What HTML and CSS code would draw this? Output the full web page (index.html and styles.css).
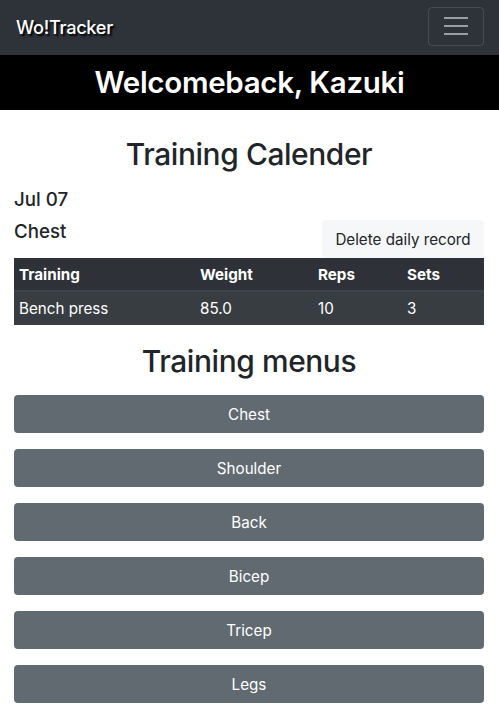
FILE: index.html
```html
<!DOCTYPE html>
<html lang="en">
<head>
<meta charset="utf-8">
<title>Wo!Tracker</title>
<link rel="stylesheet" href="styles.css">
</head>
<body>
<nav class="navbar">
  <a class="brand" href="#">Wo!Tracker</a>
  <button class="toggler" aria-label="menu">
    <span class="bar"></span><span class="bar"></span><span class="bar"></span>
  </button>
</nav>
<header class="welcome">Welcomeback, Kazuki</header>
<main class="container">
  <h2 class="title">Training Calender</h2>
  <div class="date">Jul 07</div>
  <div class="day-row">
    <div class="part">Chest</div>
    <button class="btn-light">Delete daily record</button>
  </div>
  <table class="records">
    <thead>
      <tr><th class="c1">Training</th><th class="c2">Weight</th><th class="c3">Reps</th><th class="c4">Sets</th></tr>
    </thead>
    <tbody>
      <tr><td>Bench press</td><td>85.0</td><td>10</td><td>3</td></tr>
    </tbody>
  </table>
  <h2 class="title menus-title">Training menus</h2>
  <div class="menus">
    <button class="btn-menu">Chest</button>
    <button class="btn-menu">Shoulder</button>
    <button class="btn-menu">Back</button>
    <button class="btn-menu">Bicep</button>
    <button class="btn-menu">Tricep</button>
    <button class="btn-menu">Legs</button>
  </div>
</main>
</body>
</html>
```
FILE: styles.css
```css
* { box-sizing: border-box; }
body {
  margin: 0;
  font-family: Inter, "Liberation Sans", sans-serif;
  color: #212529;
  background: #fff;
}
.navbar {
  height: 55px;
  background: #2e333a;
  display: flex;
  align-items: center;
  justify-content: space-between;
  padding: 0 15px 0 16px;
}
.brand {
  color: #fff;
  text-decoration: none;
  font-size: 18.2px;
  font-weight: 500;
  letter-spacing: -0.3px;
  text-shadow: 2px 2px 2px #000;
  margin-top: -2px;
}
.toggler {
  width: 56px;
  height: 39px;
  background: transparent;
  border: 1px solid rgba(255,255,255,0.12);
  border-radius: 4px;
  display: flex;
  flex-direction: column;
  align-items: center;
  justify-content: center;
  gap: 6px;
  padding: 0;
  margin-top: -3px;
}
.toggler .bar {
  display: block;
  width: 24px;
  height: 2px;
  background: #9a9da1;
}
.welcome {
  height: 55px;
  background: #000;
  color: #fff;
  text-align: center;
  font-size: 29.5px;
  font-weight: 600;
  line-height: 55px;
  letter-spacing: -0.3px;
}
.container {
  padding: 0 15px 0 14px;
}
.title {
  margin: 24px 0 0;
  font-size: 29.9px;
  font-weight: 500;
  line-height: 40px;
  text-align: center;
  letter-spacing: -0.4px;
}
.date {
  font-size: 18.7px;
  font-weight: 500;
  line-height: 28px;
  margin-top: 12px;
}
.day-row {
  display: flex;
  justify-content: space-between;
  align-items: flex-start;
}
.part {
  font-size: 18.7px;
  font-weight: 500;
  line-height: 28px;
  margin-top: 4px;
}
.btn-light {
  font-family: inherit;
  font-size: 15.2px;
  color: #212529;
  background: #f6f7f8;
  border: none;
  border-radius: 4px;
  height: 38px;
  width: 162px;
  padding: 0;
  margin-top: 6px;
}
.records {
  width: 100%;
  border-collapse: collapse;
  font-size: 15.2px;
  color: #fff;
}
.records th, .records td {
  text-align: left;
  padding: 0 5px;
}
.records th {
  background: #2e3238;
  font-weight: 700;
  height: 33px;
  border-bottom: 2px solid #3d434a;
}
.records td {
  background: #383d42;
  height: 34px;
}
.c1 { width: 181px; }
.c2 { width: 118px; }
.c3 { width: 89px; }
.menus-title {
  margin-top: 16px;
}
.menus {
  display: flex;
  flex-direction: column;
  gap: 16px;
  margin-top: 14px;
  padding-bottom: 20px;
}
.btn-menu {
  font-family: inherit;
  font-size: 15.2px;
  color: #fff;
  background: #616a71;
  border: none;
  border-radius: 4px;
  height: 38px;
  width: 100%;
}
```
